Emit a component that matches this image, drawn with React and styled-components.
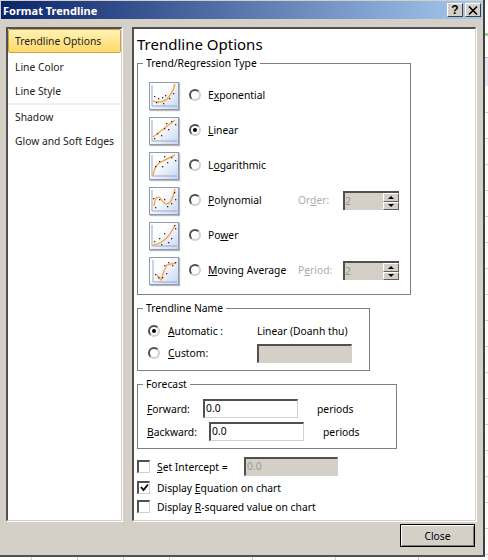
import styled, { createGlobalStyle } from 'styled-components'

const GlobalStyle = createGlobalStyle`
  html, body { margin: 0; background: #fff; }
  body { font: 10.3px/14px "Noto Sans", "Liberation Sans", sans-serif; color: #000; }
`

const curves = {
  exponential: 'M4 19C10 21 16 20 20 15C23 11 25 7 26 2',
  linear: 'M4 20L26 3',
  logarithmic: 'M4 24C6 12 10 11 14 9L26 3',
  polynomial: 'M5 19C6 10 9 8 12 12C15 18 19 18 22 14C24 10 25 6 26 2',
  power: 'M4 23C12 22 20 16 26 3',
  moving: 'M8 18L12 23L15 14L18 8L22 7L27 6',
}

const dots = {
  exponential: [[5, 14], [9, 16], [13, 15], [16, 13], [20, 16], [24, 11], [14, 21], [7, 20]],
  linear: [[5, 21], [8, 16], [12, 18], [15, 11], [19, 12], [22, 4], [26, 7], [17, 6]],
  logarithmic: [[6, 14], [10, 9], [15, 4], [18, 10], [22, 5], [26, 8], [13, 14]],
  polynomial: [[4, 11], [6, 20], [10, 12], [15, 12], [18, 19], [22, 16], [25, 5], [26, 12]],
  power: [[5, 19], [10, 16], [12, 22], [15, 11], [19, 20], [22, 16], [25, 3], [26, 6]],
  moving: [[6, 17], [9, 20], [13, 20], [15, 8], [19, 5], [23, 8], [26, 5], [17, 16]],
}

function TrendIcon({ type }) {
  return (
    <IconBox>
      <svg width="28" height="26" viewBox="0 0 28 26">
        <path d={type === 'moving' ? 'M3 2V24H27' : 'M2 2V23H27'} fill="none" stroke="#9aa9bf" />
        <path d={curves[type]} fill="none" stroke="#f7a750" strokeWidth="1.4" transform="translate(-1 -1)" />
        {dots[type].map(([x, y]) => (
          <rect key={`${x}-${y}`} x={x - 1} y={y - 1} width="1.3" height="1.3" fill="#4a2410" />
        ))}
      </svg>
    </IconBox>
  )
}

function Spinner({ value }) {
  return (
    <SpinBox>
      <SpinValue>{value}</SpinValue>
      <SpinButtons>
        <SpinButton><ArrowUp /></SpinButton>
        <SpinButton><ArrowDown /></SpinButton>
      </SpinButtons>
    </SpinBox>
  )
}

function Check({ checked }) {
  return (
    <CheckBox>
      {checked && (
        <svg width="9" height="9" viewBox="0 0 9 9">
          <path d="M1 4L3.5 7L8 1.5" fill="none" stroke="#000" strokeWidth="1.8" />
        </svg>
      )}
    </CheckBox>
  )
}

function App() {
  return (
    <Page>
      <GlobalStyle />
      <Dialog>
        <TitleBar>
          <TitleText>Format Trendline</TitleText>
          <TitleButtons>
            <CaptionButton>?</CaptionButton>
            <CaptionButton>
              <svg width="10" height="9" viewBox="0 0 10 9">
                <path d="M1 0.5L9 8.5M9 0.5L1 8.5" stroke="#000" strokeWidth="1.6" fill="none" />
              </svg>
            </CaptionButton>
          </TitleButtons>
        </TitleBar>

        <Panels>
          <SideList>
            <SideSelected>Trendline Options</SideSelected>
            <SideItem>Line Color</SideItem>
            <SideItem>Line Style</SideItem>
            <SideDivider />
            <SideItem>Shadow</SideItem>
            <SideItem>Glow and Soft Edges</SideItem>
          </SideList>

          <Content>
            <Heading>Trendline Options</Heading>

            <TrendGroup>
              <GroupLegend>Trend/Regression Type</GroupLegend>
              <TrendRow>
                <TrendIcon type="exponential" />
                <Radio />
                <TrendLabel>E<u>x</u>ponential</TrendLabel>
              </TrendRow>
              <TrendRow>
                <TrendIcon type="linear" />
                <Radio $on />
                <TrendLabel><u>L</u>inear</TrendLabel>
              </TrendRow>
              <TrendRow>
                <TrendIcon type="logarithmic" />
                <Radio />
                <TrendLabel>L<u>o</u>garithmic</TrendLabel>
              </TrendRow>
              <TrendRow>
                <TrendIcon type="polynomial" />
                <Radio />
                <TrendLabel><u>P</u>olynomial</TrendLabel>
                <MutedLabel>Or<u>d</u>er:</MutedLabel>
                <Spinner value="2" />
              </TrendRow>
              <TrendRow>
                <TrendIcon type="power" />
                <Radio />
                <TrendLabel>Po<u>w</u>er</TrendLabel>
              </TrendRow>
              <TrendRow>
                <TrendIcon type="moving" />
                <Radio />
                <TrendLabel><u>M</u>oving Average</TrendLabel>
                <MutedLabel>P<u>e</u>riod:</MutedLabel>
                <Spinner value="2" />
              </TrendRow>
            </TrendGroup>

            <NameGroup>
              <GroupLegend>Trendline Name</GroupLegend>
              <NameRow>
                <Radio $on />
                <NameLabel><u>A</u>utomatic :</NameLabel>
                <span>Linear (Doanh thu)</span>
              </NameRow>
              <NameRow>
                <Radio />
                <NameLabel><u>C</u>ustom:</NameLabel>
                <Field $width={95} $disabled />
              </NameRow>
            </NameGroup>

            <ForecastGroup>
              <GroupLegend>Forecast</GroupLegend>
              <ForecastRow>
                <ForecastLabel $width={56}><u>F</u>orward:</ForecastLabel>
                <Field $width={95}>0.0</Field>
                <Periods>periods</Periods>
              </ForecastRow>
              <ForecastRow>
                <ForecastLabel $width={62}><u>B</u>ackward:</ForecastLabel>
                <Field $width={95}>0.0</Field>
                <Periods>periods</Periods>
              </ForecastRow>
            </ForecastGroup>

            <CheckRow $height={21}>
              <Check />
              <InterceptLabel><u>S</u>et Intercept =</InterceptLabel>
              <Field $width={94} $disabled>0.0</Field>
            </CheckRow>
            <CheckRow $height={20}>
              <Check checked />
              <CheckLabel>Display <u>E</u>quation on chart</CheckLabel>
            </CheckRow>
            <CheckRow $height={18}>
              <Check />
              <CheckLabel>Display <u>R</u>-squared value on chart</CheckLabel>
            </CheckRow>
          </Content>
        </Panels>

        <Footer>
          <CloseButton>Close</CloseButton>
        </Footer>
      </Dialog>
    </Page>
  )
}

export default App

const tick = x => `linear-gradient(#d0d0d0, #d0d0d0) ${x}px 557px / 1px 3px no-repeat`

// the spreadsheet behind the dialog shows only as a thin strip of grid lines
const Page = styled.div`
  width: 488px;
  height: 560px;
  overflow: hidden;
  background:
    ${[31, 77, 123, 169, 252, 335, 418].map(tick).join(', ')},
    linear-gradient(#a4cf9c, #a4cf9c) 485px 33px / 3px 3px no-repeat,
    linear-gradient(#b8b8b8, #b8b8b8) 485px 57px / 3px 1px no-repeat,
    linear-gradient(#e6eaf0, #e6eaf0) 485px 58px / 3px 28px no-repeat,
    repeating-linear-gradient(#d0d0d0 0 1px, transparent 1px 26px) 485px 112px / 3px 448px no-repeat,
    #fff;
`
const Dialog = styled.div`
  box-sizing: border-box;
  width: 485px;
  height: 557px;
  padding: 1px 1px 0;
  background: #d4d0c8;
  border-right: 2px solid #404040;
  border-bottom: 2px solid #505050;
  display: flex;
  flex-direction: column;
`
const TitleBar = styled.div`
  height: 18px;
  flex: none;
  display: flex;
  align-items: center;
  justify-content: space-between;
  padding: 0 1px 0 2px;
  background: linear-gradient(90deg, #0a246a, #a6caf0);
`
const TitleText = styled.div`
  color: #fff;
  font: bold 11px "Noto Sans", "Liberation Sans", sans-serif;
`
const TitleButtons = styled.div`
  display: flex;
  gap: 2px;
`
const CaptionButton = styled.div`
  box-sizing: border-box;
  width: 16px;
  height: 14px;
  display: flex;
  align-items: center;
  justify-content: center;
  background: #d4d0c8;
  font: bold 12px "Liberation Sans", sans-serif;
  border: 1px solid;
  border-color: #fff #404040 #404040 #fff;
`
const Panels = styled.div`
  display: flex;
  gap: 10px;
  padding: 8px 0 0 5px;
`
const Sunken = styled.div`
  box-sizing: border-box;
  height: 494px;
  background: #fff;
  border-style: solid;
  border-width: 2px 1px 1px 2px;
  border-color: #505050 #d4d0c8 #d4d0c8 #505050;
  box-shadow: 1px 1px 0 #fff;
`
const SideList = styled(Sunken)`
  width: 116px;
  flex: none;
  display: flex;
  flex-direction: column;
`
const SideItem = styled.div`
  height: 24px;
  flex: none;
  display: flex;
  align-items: center;
  padding-left: 7px;
  color: #222;
  white-space: nowrap;
`
const SideSelected = styled(SideItem)`
  box-sizing: border-box;
  margin-bottom: 2px;
  padding-left: 6px;
  border: 1px solid #c6a64c;
  border-radius: 2px;
  background: linear-gradient(#fff3b4, #ffd868);
`
const SideDivider = styled.div`
  height: 2px;
  flex: none;
  background: #f0f0f8;
`
const Content = styled(Sunken)`
  width: 344px;
  flex: none;
  display: flex;
  flex-direction: column;
  align-items: flex-start;
  padding: 5px 0 0 3px;
`
const Heading = styled.div`
  height: 20px;
  margin-bottom: 2px;
  font-size: 15px;
  line-height: 20px;
`
const GroupLegend = styled.legend`
  padding: 0 3px;
  line-height: 14px;
`
const Group = styled.fieldset`
  box-sizing: border-box;
  margin: 0;
  min-width: 0;
  border: 1px solid #808080;
`
const TrendGroup = styled(Group)`
  width: 274px;
  padding: 8px 0 6px 11px;
  margin-bottom: 6px;
  ${GroupLegend} { margin-left: -6px; }
`
const NameGroup = styled(Group)`
  width: 233px;
  padding: 5px 0 6px 10px;
  margin-bottom: 6px;
  ${GroupLegend} { margin-left: -5px; }
`
const ForecastGroup = styled(Group)`
  width: 260px;
  padding: 6px 0 5px 9px;
  margin-bottom: 7px;
  ${GroupLegend} { margin-left: -4px; }
`
const IconBox = styled.div`
  box-sizing: border-box;
  width: 30px;
  height: 28px;
  flex: none;
  margin-right: 10px;
  border: 1px solid #8c9bb3;
  background: linear-gradient(135deg, #fff 35%, #c4d6f4);
  box-shadow: 1px 1px 1px #b8b8b8;
`
const Radio = styled.div`
  box-sizing: border-box;
  width: 12px;
  height: 12px;
  flex: none;
  position: relative;
  border-radius: 50%;
  border: 2px solid;
  border-color: #505050 #d4d0c8 #d4d0c8 #505050;
  background: #fff;
  &::after {
    content: '';
    display: ${p => (p.$on ? 'block' : 'none')};
    position: absolute;
    left: 2px;
    top: 2px;
    width: 4px;
    height: 4px;
    border-radius: 50%;
    background: #000;
  }
`
const TrendLabel = styled.div`
  width: 90px;
  margin-left: 7px;
  flex: none;
  white-space: nowrap;
`
const MutedLabel = styled.div`
  width: 45px;
  flex: none;
  color: #b0aea8;
`
// radios and labels sit a pixel above the centre of the thumbnail
const TrendRow = styled.div`
  height: 35px;
  display: flex;
  align-items: center;
  ${Radio}, ${TrendLabel}, ${MutedLabel} { margin-bottom: 2px; }
`
const SpinBox = styled.div`
  box-sizing: border-box;
  width: 56px;
  height: 19px;
  display: flex;
  background: #d4d0c8;
  border-style: solid;
  border-width: 2px 0 0 2px;
  border-color: #505050;
`
const SpinValue = styled.div`
  flex: 1;
  color: #9a9890;
  line-height: 16px;
`
const SpinButtons = styled.div`
  width: 16px;
  display: flex;
  flex-direction: column;
`
const SpinButton = styled.div`
  box-sizing: border-box;
  flex: 1;
  display: flex;
  align-items: center;
  justify-content: center;
  border: 1px solid;
  border-color: #fff #606060 #606060 #fff;
`
const ArrowUp = styled.div`
  border: 3px solid transparent;
  border-top: 0;
  border-bottom: 3px solid #000;
`
const ArrowDown = styled(ArrowUp)`
  border-bottom: 0;
  border-top: 3px solid #000;
`
const NameRow = styled.div`
  height: 22px;
  display: flex;
  align-items: center;
`
const NameLabel = styled.div`
  width: 89px;
  margin-left: 8px;
  flex: none;
`
const Field = styled.div`
  box-sizing: border-box;
  width: ${p => p.$width}px;
  height: 19px;
  flex: none;
  padding-left: 1px;
  line-height: 15px;
  color: ${p => (p.$disabled ? '#9a9890' : '#000')};
  background: ${p => (p.$disabled ? '#d4d0c8' : '#fff')};
  border-style: solid;
  border-width: 2px 1px 1px 2px;
  border-color: #505050 #d4d0c8 #d4d0c8 #505050;
`
const ForecastRow = styled.div`
  height: 23px;
  display: flex;
  align-items: center;
`
const ForecastLabel = styled.div`
  width: ${p => p.$width}px;
  flex: none;
`
const Periods = styled.div`
  margin-left: 19px;
`
const CheckRow = styled.div`
  height: ${p => p.$height}px;
  display: flex;
  align-items: center;
`
const CheckBox = styled.div`
  box-sizing: border-box;
  width: 13px;
  height: 13px;
  flex: none;
  margin-right: 7px;
  display: flex;
  align-items: center;
  justify-content: center;
  background: #fff;
  border-style: solid;
  border-width: 2px 1px 1px 2px;
  border-color: #505050 #d4d0c8 #d4d0c8 #505050;
`
const CheckLabel = styled.span`
  padding-top: 2px;
`
const InterceptLabel = styled.div`
  width: 87px;
  flex: none;
`
const Footer = styled.div`
  display: flex;
  justify-content: flex-end;
  padding: 3px 7px 0 0;
`
const CloseButton = styled.div`
  box-sizing: border-box;
  width: 75px;
  height: 23px;
  display: flex;
  align-items: center;
  justify-content: center;
  background: #d4d0c8;
  border: 1px solid #000;
  box-shadow: inset 1px 1px 0 #fff, inset -1px -1px 0 #808080;
`
